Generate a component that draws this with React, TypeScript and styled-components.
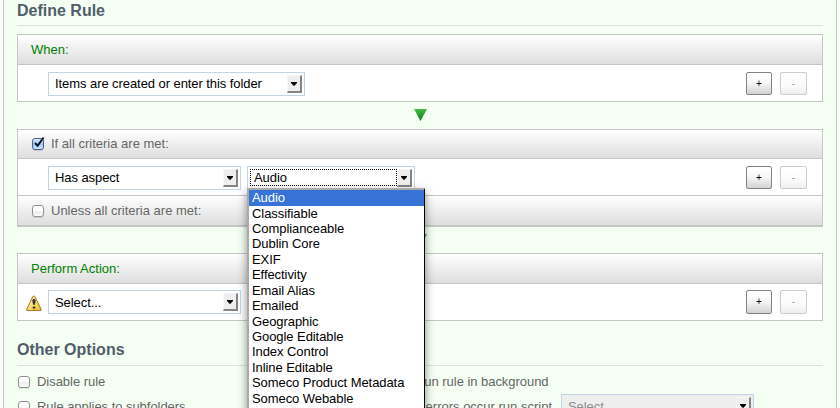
import React from 'react';
import styled, { createGlobalStyle, css } from 'styled-components';

const GlobalStyle = createGlobalStyle`
  *, *::before, *::after { box-sizing: border-box; }
  body {
    margin: 0;
    background: #fff;
    font-family: "Liberation Sans", Arial, sans-serif;
    font-size: 13px;
    line-height: 16px;
    color: #000;
    overflow: hidden;
  }
`;

const Page = styled.main`
  height: 408px;
  padding: 0 3px;
  overflow: hidden;
`;

const Panel = styled.section`
  height: 408px;
  padding: 0 13px;
  background: #f5fff3;
  border: solid #c5c5c5;
  border-width: 0 1px;
  overflow: hidden;
`;

const Heading = styled.h2<{ $height: number; $drop?: number }>`
  display: flex;
  align-items: flex-end;
  height: ${(p) => p.$height}px;
  margin: 0;
  padding-bottom: ${(p) => 6 - (p.$drop ?? 0)}px;
  border-bottom: 1px solid #dce3dc;
  color: #515d6b;
  font-size: 16px;
  line-height: 18px;
`;

const RuleBox = styled.div<{ $gap?: number }>`
  margin-top: ${(p) => p.$gap ?? 0}px;
  border: 1px solid #c5c5c5;
  background: #fff;
`;

const BoxHeader = styled.div<{ $green?: boolean; $height: number; $last?: boolean }>`
  display: flex;
  align-items: center;
  gap: 7px;
  height: ${(p) => p.$height}px;
  padding-left: ${(p) => (p.$green ? 13 : 14)}px;
  border-bottom: 1px solid #c5c5c5;
  ${(p) => p.$last && css`border-top: 1px solid #c5c5c5;`}
  background: linear-gradient(#fff, #dedede);
  color: ${(p) => (p.$green ? '#008000' : '#666')};
`;

const ConfigRow = styled.div<{ $top?: number }>`
  display: flex;
  align-items: flex-start;
  height: 36px;
  padding: ${(p) => p.$top ?? 7}px 15px 0 0;
`;

const ConfigIcon = styled.div`
  display: flex;
  justify-content: center;
  width: 30px;
  padding: 5px 0 0 1px;
`;

const Spacer = styled.div`
  flex: 1;
`;

const SelectFrame = styled.div<{ $width: number; $disabled?: boolean; $gap?: number }>`
  position: relative;
  display: flex;
  flex: none;
  width: ${(p) => p.$width}px;
  height: 24px;
  margin-left: ${(p) => p.$gap ?? 0}px;
  padding: 2px;
  border: 1px solid #c2d5e5;
  background: ${(p) => (p.$disabled ? '#eee' : '#fff')};
  color: ${(p) => (p.$disabled ? '#8c8c8c' : '#000')};
  letter-spacing: -0.07px;
`;

const SelectValue = styled.span<{ $focused?: boolean; $low?: boolean }>`
  flex: 1;
  height: 17px;
  padding-left: 3px;
  border: 1px ${(p) => (p.$focused ? 'dotted #000' : 'solid transparent')};
  line-height: ${(p) => (p.$low ? 18 : 16)}px;
  white-space: nowrap;
`;

const SelectButton = styled.span`
  display: flex;
  justify-content: center;
  width: 15px;
  height: 18px;
  padding-top: 6px;
  background: #eee;
  border: solid;
  border-color: #f7f7f7 #858585 #858585 #f7f7f7;
  border-width: 1px 2px 2px 1px;
`;

const Buttons = styled.div`
  display: flex;
  gap: 8px;
`;

const SmallButton = styled.button<{ $width: number; $tall?: boolean }>`
  width: ${(p) => p.$width}px;
  height: ${(p) => (p.$tall ? 24 : 23)}px;
  padding: 0;
  border: 1px solid #828282;
  border-radius: 2px;
  background: linear-gradient(#fff 10%, #f5f5f5 50%, #d2d2d2);
  color: #000;
  font: 10px/16px "Liberation Sans", Arial, sans-serif;
  &:disabled {
    border-color: #cdcdcd;
    background: linear-gradient(#fff, #fbfbfb 60%, #eee);
    color: #999;
  }
`;

const Flow = styled.div<{ $height: number }>`
  display: flex;
  justify-content: center;
  height: ${(p) => p.$height}px;
  padding: 7px 0 0 1px;
`;

const CheckFrame = styled.span<{ $checked?: boolean }>`
  position: relative;
  flex: none;
  width: 12px;
  height: 12px;
  border: 1px solid ${(p) => (p.$checked ? '#4b5c91' : '#929292')};
  border-radius: 3px;
  background: ${(p) =>
    p.$checked ? 'linear-gradient(#dbe9fb, #a3c8f3 55%, #c5eaff)' : 'linear-gradient(#fff 45%, #eee 60%, #fafafa)'};
  box-shadow: 0 1px 1px rgba(0, 0, 0, 0.12);
  svg { position: absolute; left: 0; top: -3px; overflow: visible; }
`;

const Options = styled.div`
  display: grid;
  grid-template-columns: 378px 1fr;
  grid-template-rows: 28px 24px;
  color: #666;
`;

const Option = styled.label<{ $first?: boolean }>`
  display: flex;
  align-items: center;
  gap: 7px;
  padding: ${(p) => (p.$first ? 4 : 2)}px 0 0 1px;
  letter-spacing: -0.04px;
  white-space: nowrap;
`;

const ScriptOption = styled.div`
  display: flex;
  align-items: flex-start;
  justify-content: flex-end;
  padding-right: 69px;
  white-space: nowrap;
`;

const ScriptLabel = styled.span`
  padding-top: 5px;
`;

const Popup = styled.ul`
  position: absolute;
  z-index: 2;
  left: -1px;
  top: 21px;
  width: 178px;
  height: 230px;
  margin: 0;
  padding: 0;
  list-style: none;
  background: #fff;
  border: solid #aaa;
  border-width: 2px 1px 0 2px;
  border-right-color: #000;
  box-shadow: 0 4px 9px rgba(0, 0, 0, 0.45);
`;

const PopupItem = styled.li<{ $selected?: boolean }>`
  height: ${(p) => (p.$selected ? 15.6 : 15.43)}px;
  padding-left: 3px;
  line-height: 15.43px;
  white-space: nowrap;
  background: ${(p) => (p.$selected ? '#3874d7' : 'transparent')};
  color: ${(p) => (p.$selected ? '#fff' : '#000')};
`;

const ASPECTS = [
  'Audio', 'Classifiable', 'Complianceable', 'Dublin Core', 'EXIF', 'Effectivity', 'Email Alias',
  'Emailed', 'Geographic', 'Google Editable', 'Index Control', 'Inline Editable',
  'Someco Product Metadata', 'Someco Webable',
];

type SelectProps = {
  value: string;
  width: number;
  gap?: number;
  focused?: boolean;
  disabled?: boolean;
  low?: boolean;
  children?: React.ReactNode;
};

const Select = ({ value, width, gap, focused, disabled, low, children }: SelectProps) => (
  <SelectFrame $width={width} $gap={gap} $disabled={disabled}>
    <SelectValue $focused={focused} $low={low}>{value}</SelectValue>
    <SelectButton>
      <svg width="6" height="4" viewBox="0 0 6 4"><path d="M0 0h6v1L3.5 3.7h-1L0 1z" /></svg>
    </SelectButton>
    {children}
  </SelectFrame>
);

const Checkbox = ({ checked }: { checked?: boolean }) => (
  <CheckFrame $checked={checked}>
    {checked && (
      <svg width="12" height="13" viewBox="0 0 12 13">
        <path d="M2 7 4.6 9.8 10.6 1.5" fill="none" stroke="#071329" strokeWidth="2" />
      </svg>
    )}
  </CheckFrame>
);

const AddRemove = ({ tall }: { tall?: boolean }) => (
  <Buttons>
    <SmallButton $width={26} $tall={tall}>+</SmallButton>
    <SmallButton $width={27} $tall={tall} disabled>-</SmallButton>
  </Buttons>
);

const DownArrow = ({ id }: { id: string }) => (
  <svg width="13" height="12" viewBox="0 0 13 12">
    <defs>
      <linearGradient id={id} x1="0" y1="0" x2="0" y2="1">
        <stop offset="0" stopColor="#48b848" />
        <stop offset="1" stopColor="#087c08" />
      </linearGradient>
    </defs>
    <path d="M0 0h13L6.5 12z" fill={`url(#${id})`} />
  </svg>
);

const Warning = () => (
  <svg width="16" height="16" viewBox="0 0 16 16">
    <defs>
      <linearGradient id="warn" x1="0" y1="0" x2="1" y2="1">
        <stop offset="0.2" stopColor="#fff3a5" />
        <stop offset="1" stopColor="#eebd28" />
      </linearGradient>
    </defs>
    <path d="M7.1 1.2h1.6L15 14v1.4H.8V14z" fill="url(#warn)" stroke="#a27a19" strokeLinejoin="round" />
    <path d="M6.5 5.2 7.2 4h1.6l.7 1.2v2L8.5 10h-1l-1-2.8z" fill="#333" />
    <path d="M8 11v3.2M6.5 12.6h3" stroke="#333" strokeWidth="1" />
  </svg>
);

export default function App() {
  return (
    <>
      <GlobalStyle />
      <Page>
        <Panel>
          <Heading $height={26} $drop={1}>Define Rule</Heading>
          <RuleBox $gap={8}>
            <BoxHeader $green $height={30}>When:</BoxHeader>
            <ConfigRow>
              <ConfigIcon />
              <Select value="Items are created or enter this folder" width={257} />
              <Spacer />
              <AddRemove />
            </ConfigRow>
          </RuleBox>
          <Flow $height={27}><DownArrow id="arrow-criteria" /></Flow>
          <RuleBox>
            <BoxHeader $height={29}><Checkbox checked />If all criteria are met:</BoxHeader>
            <ConfigRow>
              <ConfigIcon />
              <Select value="Has aspect" width={193} />
              <Select value="Audio" width={168} gap={6} focused>
                <Popup>
                  {ASPECTS.map((name, i) => (
                    <PopupItem key={name} $selected={i === 0}>{name}</PopupItem>
                  ))}
                </Popup>
              </Select>
              <Spacer />
              <AddRemove />
            </ConfigRow>
            <BoxHeader $height={31} $last><Checkbox />Unless all criteria are met:</BoxHeader>
          </RuleBox>
          <Flow $height={26}><DownArrow id="arrow-action" /></Flow>
          <RuleBox>
            <BoxHeader $green $height={30}>Perform Action:</BoxHeader>
            <ConfigRow $top={6}>
              <ConfigIcon><Warning /></ConfigIcon>
              <Select value="Select..." width={193} low />
              <Spacer />
              <AddRemove tall />
            </ConfigRow>
          </RuleBox>
          <Heading $height={45}>Other Options</Heading>
          <Options>
            <Option $first><Checkbox />Disable rule</Option>
            <Option $first><Checkbox />Run rule in background</Option>
            <Option><Checkbox />Rule applies to subfolders</Option>
            <ScriptOption>
              <ScriptLabel>If errors occur run script</ScriptLabel>
              <Select value="Select..." width={193} gap={9} low disabled />
            </ScriptOption>
          </Options>
        </Panel>
      </Page>
    </>
  );
}
